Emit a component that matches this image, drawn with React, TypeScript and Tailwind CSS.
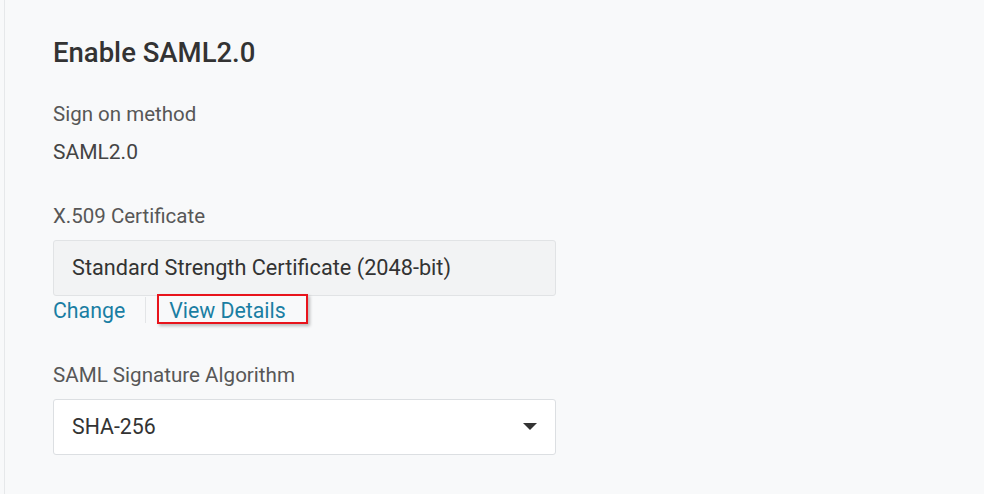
export default function App() {
  return (
    <div className="w-[984px] h-[494px] bg-[#f8f9fa] flex" style={{ fontFamily: 'Roboto, "Liberation Sans", sans-serif' }}>
      <div className="w-[4px] shrink-0" />
      <div className="flex-1 border-l border-[#e6e8ea] pl-[48px] pt-[37px] flex flex-col">
        <h1 className="text-[27.5px] leading-[32px] font-medium text-[#333]">Enable SAML2.0</h1>

        <div className="mt-[33px] text-[20.5px] leading-[24px] text-[#575757]">Sign on method</div>
        <div className="mt-[14px] text-[21px] leading-[24px] text-[#444]">SAML2.0</div>

        <div className="mt-[40px] text-[20.5px] leading-[24px] text-[#575757]">X.509 Certificate</div>
        <div className="mt-[12px] w-[503px] h-[56px] bg-[#f2f3f4] border border-[#e1e3e5] rounded-[3px] flex items-center px-[18px] text-[21.7px] text-[#333]">
          Standard Strength Certificate (2048-bit)
        </div>
        <div className="mt-[1px] h-[26px] flex items-center text-[21.3px] leading-[24px] text-[#1a7ea3]">
          <span className="pt-[2px]">Change</span>
          <span className="ml-[20px] w-px h-full bg-[#e3e5e7]" />
          <span className="relative ml-[23px] pt-[2px]">
            View Details
            <span className="absolute left-[-12px] right-[-22px] top-[-3px] bottom-[-1px] border-2 border-[#e8141c] shadow-[2px_2px_3px_rgba(0,0,0,0.25)]" />
          </span>
        </div>

        <div className="mt-[40px] text-[20.6px] leading-[24px] text-[#575757]">SAML Signature Algorithm</div>
        <div className="mt-[12px] w-[503px] h-[56px] bg-white border border-[#dcdfe2] rounded-[3px] flex items-center justify-between pl-[18px] pr-[18px] text-[21.3px] text-[#333]">
          <span>SHA-256</span>
          <svg width="14" height="8" viewBox="0 0 14 8">
            <path d="M0 0 L14 0 L7 7 Z" fill="#333" />
          </svg>
        </div>
      </div>
    </div>
  );
}
